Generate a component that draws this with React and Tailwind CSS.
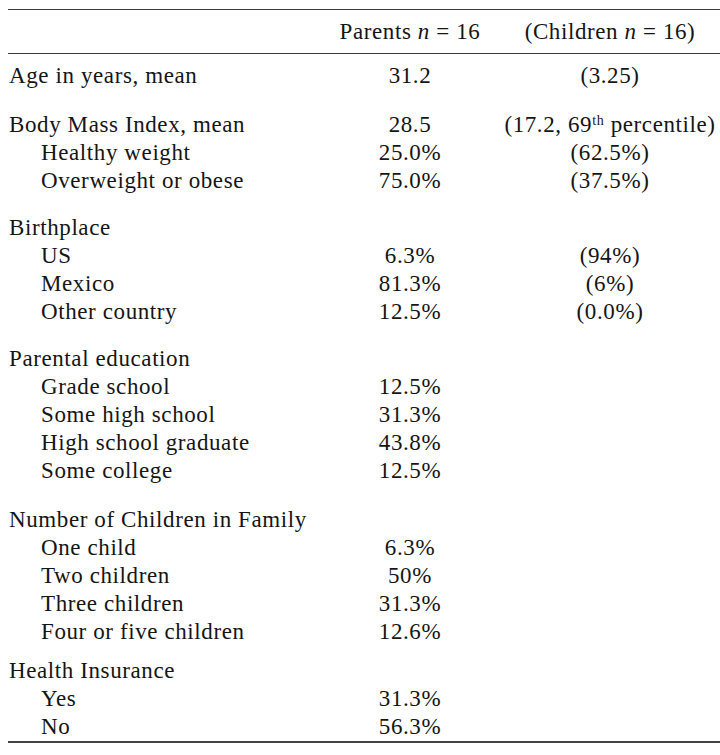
import React from 'react';

// Table groups: a heading row, then indented sub-rows
const groups = [
  { label: 'Age in years, mean', parents: '31.2', children: '(3.25)', gap: 'mt-[8px]', rows: [] },
  {
    label: 'Body Mass Index, mean',
    parents: '28.5',
    children: (
      <>
        (17.2, 69<sup className="text-[14px]">th</sup> percentile)
      </>
    ),
    gap: 'mt-[21px]',
    rows: [
      ['Healthy weight', '25.0%', '(62.5%)'],
      ['Overweight or obese', '75.0%', '(37.5%)'],
    ],
  },
  {
    label: 'Birthplace',
    gap: 'mt-[19px]',
    rows: [
      ['US', '6.3%', '(94%)'],
      ['Mexico', '81.3%', '(6%)'],
      ['Other country', '12.5%', '(0.0%)'],
    ],
  },
  {
    label: 'Parental education',
    gap: 'mt-[19px]',
    rows: [
      ['Grade school', '12.5%'],
      ['Some high school', '31.3%'],
      ['High school graduate', '43.8%'],
      ['Some college', '12.5%'],
    ],
  },
  {
    label: 'Number of Children in Family',
    gap: 'mt-[21px]',
    rows: [
      ['One child', '6.3%'],
      ['Two children', '50%'],
      ['Three children', '31.3%'],
      ['Four or five children', '12.6%'],
    ],
  },
  {
    label: 'Health Insurance',
    gap: 'mt-[11px]',
    rows: [
      ['Yes', '31.3%'],
      ['No', '56.3%'],
    ],
  },
];

function Row({ label, parents, children, indent }) {
  return (
    <div className="grid grid-cols-[1fr_200px_200px] pr-[10px] h-[28px] leading-[28px]">
      <div className={indent ? 'pl-[33px] whitespace-nowrap' : 'pl-px whitespace-nowrap'}>{label}</div>
      <div className="flex justify-center whitespace-nowrap">
        <span>{parents}</span>
      </div>
      <div className="flex justify-center whitespace-nowrap">
        <span>{children}</span>
      </div>
    </div>
  );
}

export default function App() {
  return (
    <div
      className="w-[720px] h-[755px] bg-white pl-2 pt-[9px] text-[#151515] text-[23px] tracking-[0.6px]"
      style={{ fontFamily: '"Liberation Serif", "Times New Roman", serif' }}
    >
      <div className="border-t border-b-2 border-t-[#3a3a3a] border-b-[#444]">
        {/* Header */}
        <div className="pt-[8px] pb-[7px] border-b border-[#3a3a3a]">
          <Row
            label=""
            parents={<>Parents <i>n</i> = 16</>}
            children={<>(Children <i>n</i> = 16)</>}
          />
        </div>

        {groups.map((g) => (
          <div key={g.label} className={g.gap}>
            <Row label={g.label} parents={g.parents} children={g.children} />
            {g.rows.map(([label, p, c]) => (
              <Row key={label} label={label} parents={p} children={c} indent />
            ))}
          </div>
        ))}
      </div>
    </div>
  );
}
